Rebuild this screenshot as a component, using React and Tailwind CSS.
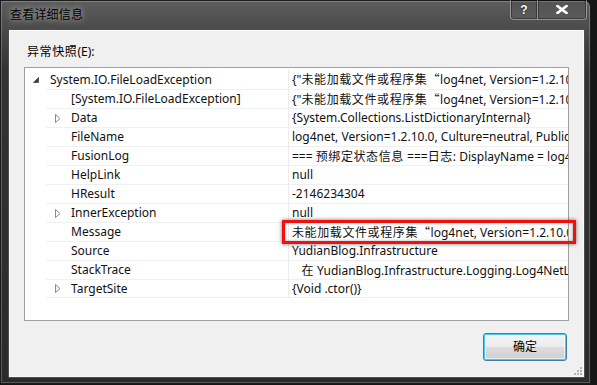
import React from "react";

const rows = [
  {
    name: "[System.IO.FileLoadException]",
    value:
      '{"未能加载文件或程序集“log4net, Version=1.2.10.0, Culture=neutral, PublicKeyToken=692fbea5521e1304”或它的某一个依赖项。"}',
  },
  { name: "Data", expand: true, value: "{System.Collections.ListDictionaryInternal}" },
  {
    name: "FileName",
    value: "log4net, Version=1.2.10.0, Culture=neutral, PublicKeyToken=692fbea5521e1304",
  },
  {
    name: "FusionLog",
    value: "=== 预绑定状态信息 ===日志: DisplayName = log4net, Version=1.2.10.0",
  },
  { name: "HelpLink", value: "null" },
  { name: "HResult", value: "-2146234304" },
  { name: "InnerException", expand: true, value: "null" },
  {
    name: "Message",
    value: "未能加载文件或程序集“log4net, Version=1.2.10.0, Culture=neutral, PublicKeyToken=692fbea5521e1304”",
  },
  { name: "Source", value: "YudianBlog.Infrastructure" },
  {
    name: "StackTrace",
    value: "   在 YudianBlog.Infrastructure.Logging.Log4NetLogger..ctor()",
  },
  { name: "TargetSite", expand: true, value: "{Void .ctor()}" },
];

// CJK runs (and the curly quotes) get the CJK face, a touch wider like YaHei
const mixed = (str) =>
  str.split(/([\u3000-\u9fff\uff00-\uffef“”]+)/).map((part, i) =>
    /[\u3000-\u9fff\uff00-\uffef“”]/.test(part) ? (
      <span key={i} className="font-['Noto_Sans_CJK_SC',sans-serif] tracking-[0.6px]">
        {part}
      </span>
    ) : (
      part
    )
  );

const Collapsed = () => (
  <svg width="6" height="9" viewBox="0 0 6 9">
    <path d="M0.5 0.5 L5 4.5 L0.5 8.5 Z" fill="#fff" stroke="#8a8a8a" strokeWidth="1" />
  </svg>
);

const Expanded = () => (
  <svg width="6" height="6" viewBox="0 0 6 6">
    <path d="M5.5 0.5 L5.5 5.5 L0.5 5.5 Z" fill="#3c3c3c" stroke="#5a5a5a" strokeWidth="1" />
  </svg>
);

const App = () => {
  return (
    <div className="relative w-[597px] h-[385px] overflow-hidden bg-[#151515] font-['Noto_Sans','Noto_Sans_CJK_SC',sans-serif] text-[12px] text-[#111]">
      {/* window */}
      <div className="w-[591px] h-[384px] rounded-tr-[7px] border border-[#1c1c1c] shadow-[inset_0_0_0_1px_rgba(255,255,255,0.22)] bg-[linear-gradient(180deg,#5d5d5d_0px,#4a4a4a_28px,#333333_70px,#2b2b2b_100%)] flex flex-col">
        {/* title bar */}
        <div className="flex h-[28px] items-start">
          <span className="pl-[9px] pt-[6px] leading-[16px] text-black tracking-[0.2px] [text-shadow:0_0_6px_rgba(255,255,255,0.75)]">
            查看详细信息
          </span>
          <div className="ml-auto mr-[3px] -mt-px flex">
            <div className="w-[28px] h-[20px] rounded-bl-[4px] border border-t-0 border-[rgba(255,255,255,0.38)] bg-[linear-gradient(180deg,rgba(0,0,0,0.1),rgba(255,255,255,0.06))] shadow-[inset_0_0_0_1px_rgba(0,0,0,0.35)] flex items-center justify-center text-white font-bold text-[12px] leading-none font-['Liberation_Sans',sans-serif] [text-shadow:0_0_2px_#000]">
              ?
            </div>
            <div className="w-[49px] h-[20px] rounded-br-[4px] border border-t-0 border-l-0 border-[rgba(255,255,255,0.38)] bg-[linear-gradient(180deg,rgba(0,0,0,0.1),rgba(255,255,255,0.06))] shadow-[inset_0_0_0_1px_rgba(0,0,0,0.35)] flex items-center justify-center">
              <svg width="12" height="9" viewBox="0 0 12 9">
                <path d="M1.5 1 L10.5 8 M10.5 1 L1.5 8" stroke="#fff" strokeWidth="2.6" strokeLinecap="square" />
              </svg>
            </div>
          </div>
        </div>

        {/* client area */}
        <div className="ml-[7px] w-[577px] h-[349px] bg-[#f0f0f0] border border-[#4f4f4f] shadow-[inset_0_0_0_1px_#fafafa] flex flex-col">
          <div className="pl-[18px] pt-[13px] leading-[16px] text-black">{mixed("异常快照")}(E):</div>

          {/* tree */}
          <div className="ml-[15px] mt-[7px] w-[545px] h-[254px] border border-[#a0a0a0] bg-white pt-[2px] overflow-hidden leading-[18px]">
            <div className="flex h-[19px]">
              <div className="w-[25px] pl-[8px] flex items-center">
                <Expanded />
              </div>
              <div className="w-[238px] whitespace-nowrap flex items-center">System.IO.FileLoadException</div>
              <div className="flex-1 min-w-0 border-l border-[#ececec] pl-[3px] overflow-hidden flex items-center">
                <span className="whitespace-pre">
                  {mixed('{"未能加载文件或程序集“log4net, Version=1.2.10.0, Culture=neutral, PublicKeyToken=692fbea5521e1304”"}')}
                </span>
              </div>
            </div>
            {rows.map((r, i) => (
              <div
                key={r.name}
                className={
                  "ml-[21px] flex h-[19px] border-t border-[#f0f0f0]" +
                  (i === rows.length - 1 ? " border-b" : "")
                }
              >
                <div className="w-[25px] pl-[9px] flex items-center">{r.expand && <Collapsed />}</div>
                <div className="w-[217px] whitespace-nowrap flex items-center">{r.name}</div>
                <div className="flex-1 min-w-0 border-l border-[#ececec] pl-[3px] overflow-hidden flex items-center">
                  <span className="whitespace-pre">{mixed(r.value)}</span>
                </div>
              </div>
            ))}
          </div>

          {/* button */}
          <div className="flex justify-end pr-[17px] mt-[12px]">
            <button className="w-[84px] h-[28px] rounded-[3px] border border-[#3c7fb1] shadow-[inset_0_0_0_1px_#48c8f2,inset_0_0_0_2px_rgba(255,255,255,0.6)] bg-[linear-gradient(180deg,#f4f4f4_0%,#ececec_48%,#dcdcdc_52%,#cfcfcf_100%)] text-black leading-none">
              确定
            </button>
          </div>

          {/* resize grip */}
          <div className="mt-auto self-end mr-[2px] mb-[2px]">
            <svg width="10" height="10" viewBox="0 0 10 10">
              <g fill="#b5b5b5">
                <rect x="8" y="2" width="2" height="2" />
                <rect x="5" y="5" width="2" height="2" />
                <rect x="8" y="5" width="2" height="2" />
                <rect x="2" y="8" width="2" height="2" />
                <rect x="5" y="8" width="2" height="2" />
                <rect x="8" y="8" width="2" height="2" />
              </g>
            </svg>
          </div>
        </div>
      </div>

      {/* red highlight annotation */}
      <div className="absolute left-[282px] top-[220px] w-[294px] h-[24px] border-[3px] border-[#f01010] shadow-[0_0_4px_rgba(0,0,0,0.55),inset_0_0_3px_rgba(0,0,0,0.35)]" />
    </div>
  );
};

export default App;
